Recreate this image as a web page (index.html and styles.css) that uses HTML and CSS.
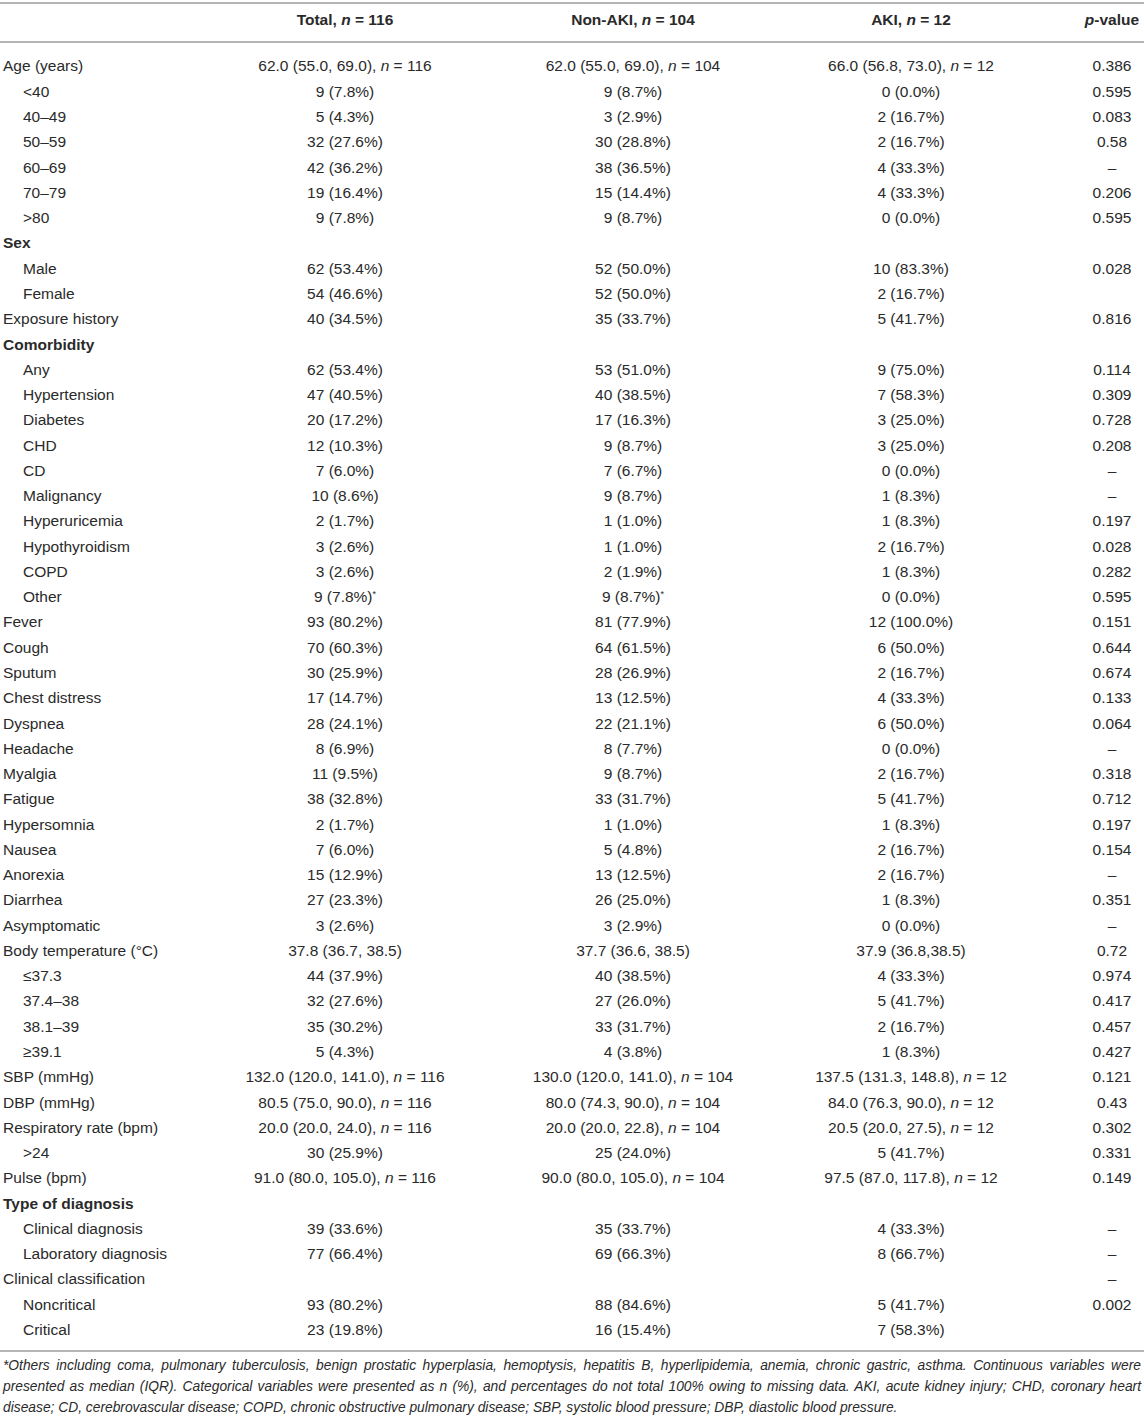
FILE: index.html
```html
<!DOCTYPE html>
<html>
<head>
<meta charset="utf-8">
<link rel="stylesheet" href="styles.css">
</head>
<body>
<table class="tbl">
<colgroup>
<col class="c-label"><col class="c-total"><col class="c-non"><col class="c-aki"><col class="c-p">
</colgroup>
<thead>
<tr><th class="lab"></th><th>Total, <i>n</i> = 116</th><th>Non-AKI, <i>n</i> = 104</th><th>AKI, <i>n</i> = 12</th><th><i>p</i>-value</th></tr>
</thead>
<tbody>
<tr class="first"><td class="lab">Age (years)</td><td>62.0 (55.0, 69.0), <i>n</i> = 116</td><td>62.0 (55.0, 69.0), <i>n</i> = 104</td><td>66.0 (56.8, 73.0), <i>n</i> = 12</td><td>0.386</td></tr>
<tr><td class="lab sub">&lt;40</td><td>9 (7.8%)</td><td>9 (8.7%)</td><td>0 (0.0%)</td><td>0.595</td></tr>
<tr><td class="lab sub">40–49</td><td>5 (4.3%)</td><td>3 (2.9%)</td><td>2 (16.7%)</td><td>0.083</td></tr>
<tr><td class="lab sub">50–59</td><td>32 (27.6%)</td><td>30 (28.8%)</td><td>2 (16.7%)</td><td>0.58</td></tr>
<tr><td class="lab sub">60–69</td><td>42 (36.2%)</td><td>38 (36.5%)</td><td>4 (33.3%)</td><td>–</td></tr>
<tr><td class="lab sub">70–79</td><td>19 (16.4%)</td><td>15 (14.4%)</td><td>4 (33.3%)</td><td>0.206</td></tr>
<tr><td class="lab sub">&gt;80</td><td>9 (7.8%)</td><td>9 (8.7%)</td><td>0 (0.0%)</td><td>0.595</td></tr>
<tr><td class="lab bold">Sex</td><td></td><td></td><td></td><td></td></tr>
<tr><td class="lab sub">Male</td><td>62 (53.4%)</td><td>52 (50.0%)</td><td>10 (83.3%)</td><td>0.028</td></tr>
<tr><td class="lab sub">Female</td><td>54 (46.6%)</td><td>52 (50.0%)</td><td>2 (16.7%)</td><td></td></tr>
<tr><td class="lab">Exposure history</td><td>40 (34.5%)</td><td>35 (33.7%)</td><td>5 (41.7%)</td><td>0.816</td></tr>
<tr><td class="lab bold">Comorbidity</td><td></td><td></td><td></td><td></td></tr>
<tr><td class="lab sub">Any</td><td>62 (53.4%)</td><td>53 (51.0%)</td><td>9 (75.0%)</td><td>0.114</td></tr>
<tr><td class="lab sub">Hypertension</td><td>47 (40.5%)</td><td>40 (38.5%)</td><td>7 (58.3%)</td><td>0.309</td></tr>
<tr><td class="lab sub">Diabetes</td><td>20 (17.2%)</td><td>17 (16.3%)</td><td>3 (25.0%)</td><td>0.728</td></tr>
<tr><td class="lab sub">CHD</td><td>12 (10.3%)</td><td>9 (8.7%)</td><td>3 (25.0%)</td><td>0.208</td></tr>
<tr><td class="lab sub">CD</td><td>7 (6.0%)</td><td>7 (6.7%)</td><td>0 (0.0%)</td><td>–</td></tr>
<tr><td class="lab sub">Malignancy</td><td>10 (8.6%)</td><td>9 (8.7%)</td><td>1 (8.3%)</td><td>–</td></tr>
<tr><td class="lab sub">Hyperuricemia</td><td>2 (1.7%)</td><td>1 (1.0%)</td><td>1 (8.3%)</td><td>0.197</td></tr>
<tr><td class="lab sub">Hypothyroidism</td><td>3 (2.6%)</td><td>1 (1.0%)</td><td>2 (16.7%)</td><td>0.028</td></tr>
<tr><td class="lab sub">COPD</td><td>3 (2.6%)</td><td>2 (1.9%)</td><td>1 (8.3%)</td><td>0.282</td></tr>
<tr><td class="lab sub">Other</td><td>9 (7.8%)<sup>*</sup></td><td>9 (8.7%)<sup>*</sup></td><td>0 (0.0%)</td><td>0.595</td></tr>
<tr><td class="lab">Fever</td><td>93 (80.2%)</td><td>81 (77.9%)</td><td>12 (100.0%)</td><td>0.151</td></tr>
<tr><td class="lab">Cough</td><td>70 (60.3%)</td><td>64 (61.5%)</td><td>6 (50.0%)</td><td>0.644</td></tr>
<tr><td class="lab">Sputum</td><td>30 (25.9%)</td><td>28 (26.9%)</td><td>2 (16.7%)</td><td>0.674</td></tr>
<tr><td class="lab">Chest distress</td><td>17 (14.7%)</td><td>13 (12.5%)</td><td>4 (33.3%)</td><td>0.133</td></tr>
<tr><td class="lab">Dyspnea</td><td>28 (24.1%)</td><td>22 (21.1%)</td><td>6 (50.0%)</td><td>0.064</td></tr>
<tr><td class="lab">Headache</td><td>8 (6.9%)</td><td>8 (7.7%)</td><td>0 (0.0%)</td><td>–</td></tr>
<tr><td class="lab">Myalgia</td><td>11 (9.5%)</td><td>9 (8.7%)</td><td>2 (16.7%)</td><td>0.318</td></tr>
<tr><td class="lab">Fatigue</td><td>38 (32.8%)</td><td>33 (31.7%)</td><td>5 (41.7%)</td><td>0.712</td></tr>
<tr><td class="lab">Hypersomnia</td><td>2 (1.7%)</td><td>1 (1.0%)</td><td>1 (8.3%)</td><td>0.197</td></tr>
<tr><td class="lab">Nausea</td><td>7 (6.0%)</td><td>5 (4.8%)</td><td>2 (16.7%)</td><td>0.154</td></tr>
<tr><td class="lab">Anorexia</td><td>15 (12.9%)</td><td>13 (12.5%)</td><td>2 (16.7%)</td><td>–</td></tr>
<tr><td class="lab">Diarrhea</td><td>27 (23.3%)</td><td>26 (25.0%)</td><td>1 (8.3%)</td><td>0.351</td></tr>
<tr><td class="lab">Asymptomatic</td><td>3 (2.6%)</td><td>3 (2.9%)</td><td>0 (0.0%)</td><td>–</td></tr>
<tr><td class="lab">Body temperature (°C)</td><td>37.8 (36.7, 38.5)</td><td>37.7 (36.6, 38.5)</td><td>37.9 (36.8,38.5)</td><td>0.72</td></tr>
<tr><td class="lab sub">≤37.3</td><td>44 (37.9%)</td><td>40 (38.5%)</td><td>4 (33.3%)</td><td>0.974</td></tr>
<tr><td class="lab sub">37.4–38</td><td>32 (27.6%)</td><td>27 (26.0%)</td><td>5 (41.7%)</td><td>0.417</td></tr>
<tr><td class="lab sub">38.1–39</td><td>35 (30.2%)</td><td>33 (31.7%)</td><td>2 (16.7%)</td><td>0.457</td></tr>
<tr><td class="lab sub">≥39.1</td><td>5 (4.3%)</td><td>4 (3.8%)</td><td>1 (8.3%)</td><td>0.427</td></tr>
<tr><td class="lab">SBP (mmHg)</td><td>132.0 (120.0, 141.0), <i>n</i> = 116</td><td>130.0 (120.0, 141.0), <i>n</i> = 104</td><td>137.5 (131.3, 148.8), <i>n</i> = 12</td><td>0.121</td></tr>
<tr><td class="lab">DBP (mmHg)</td><td>80.5 (75.0, 90.0), <i>n</i> = 116</td><td>80.0 (74.3, 90.0), <i>n</i> = 104</td><td>84.0 (76.3, 90.0), <i>n</i> = 12</td><td>0.43</td></tr>
<tr><td class="lab">Respiratory rate (bpm)</td><td>20.0 (20.0, 24.0), <i>n</i> = 116</td><td>20.0 (20.0, 22.8), <i>n</i> = 104</td><td>20.5 (20.0, 27.5), <i>n</i> = 12</td><td>0.302</td></tr>
<tr><td class="lab sub">&gt;24</td><td>30 (25.9%)</td><td>25 (24.0%)</td><td>5 (41.7%)</td><td>0.331</td></tr>
<tr><td class="lab">Pulse (bpm)</td><td>91.0 (80.0, 105.0), <i>n</i> = 116</td><td>90.0 (80.0, 105.0), <i>n</i> = 104</td><td>97.5 (87.0, 117.8), <i>n</i> = 12</td><td>0.149</td></tr>
<tr><td class="lab bold">Type of diagnosis</td><td></td><td></td><td></td><td></td></tr>
<tr><td class="lab sub">Clinical diagnosis</td><td>39 (33.6%)</td><td>35 (33.7%)</td><td>4 (33.3%)</td><td>–</td></tr>
<tr><td class="lab sub">Laboratory diagnosis</td><td>77 (66.4%)</td><td>69 (66.3%)</td><td>8 (66.7%)</td><td>–</td></tr>
<tr><td class="lab">Clinical classification</td><td></td><td></td><td></td><td>–</td></tr>
<tr><td class="lab sub">Noncritical</td><td>93 (80.2%)</td><td>88 (84.6%)</td><td>5 (41.7%)</td><td>0.002</td></tr>
<tr class="last"><td class="lab sub">Critical</td><td>23 (19.8%)</td><td>16 (15.4%)</td><td>7 (58.3%)</td><td></td></tr>
</tbody>
</table>
<p class="note"><i>*Others including coma, pulmonary tuberculosis, benign prostatic hyperplasia, hemoptysis, hepatitis B, hyperlipidemia, anemia, chronic gastric, asthma. Continuous variables were presented as median (IQR). Categorical variables were presented as n (%), and percentages do not total 100% owing to missing data. AKI, acute kidney injury; CHD, coronary heart disease; CD, cerebrovascular disease; COPD, chronic obstructive pulmonary disease; SBP, systolic blood pressure; DBP, diastolic blood pressure.</i></p>
</body>
</html>
```

FILE: styles.css
```css
html, body {
  margin: 0;
  padding: 0;
  background: #ffffff;
}
body {
  font-family: "Liberation Sans", Arial, Helvetica, sans-serif;
  color: #2a2a2a;
  width: 1144px;
}
.tbl {
  width: 1144px;
  border-collapse: collapse;
  table-layout: fixed;
  margin-top: 2px;
  border-top: 2px solid #b4b4b4;
  border-bottom: 2px solid #b4b4b4;
  font-size: 15.5px;
}
.c-label { width: 166px; }
.c-total { width: 358px; }
.c-non { width: 218px; }
.c-aki { width: 338px; }
.c-p { width: 64px; }
.tbl th {
  font-weight: bold;
  text-align: center;
  height: 39px;
  padding: 0 0 5px 0;
  box-sizing: border-box;
  vertical-align: middle;
  border-bottom: 2px solid #b4b4b4;
  white-space: nowrap;
  line-height: 18px;
}
.tbl td {
  text-align: center;
  height: 25.28px;
  line-height: 20px;
  padding: 0;
  white-space: nowrap;
  vertical-align: middle;
}
.tbl td.lab {
  text-align: left;
  padding-left: 3px;
}
.tbl td.sub {
  padding-left: 23px;
}
.tbl td.bold {
  font-weight: bold;
}
.tbl tr.first td {
  height: 37.28px;
  vertical-align: bottom;
  padding-bottom: 3px;
  box-sizing: border-box;
}
.tbl tr.last td {
  height: 33.28px;
  vertical-align: top;
  padding-top: 3px;
  box-sizing: border-box;
}
sup {
  font-size: 9px;
  line-height: 0;
  vertical-align: 5px;
}
.note {
  margin: 3px 3px 0 3px;
  font-size: 13.8px;
  line-height: 21px;
  text-align: justify;
  color: #2a2a2a;
}
```
